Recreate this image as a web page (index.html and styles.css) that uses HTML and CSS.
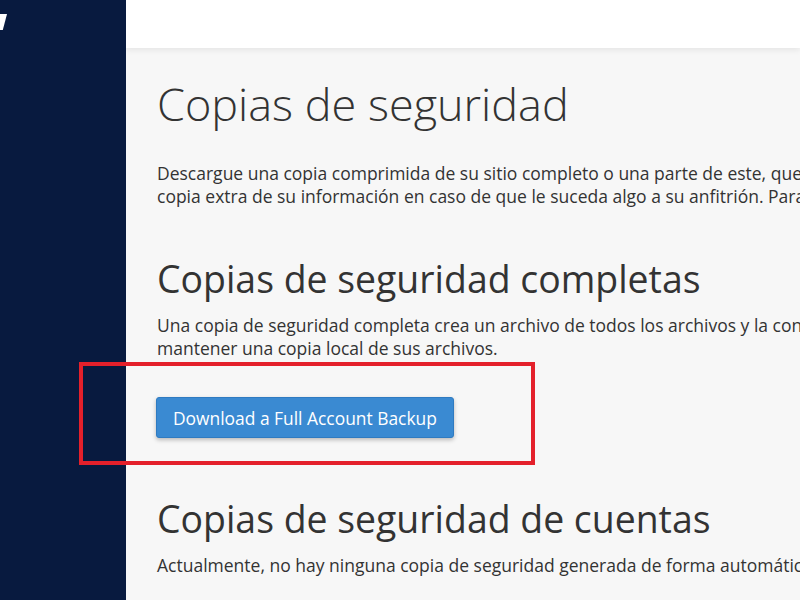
FILE: index.html
```html
<!DOCTYPE html>
<html lang="es">
<head>
  <meta charset="UTF-8">
  <title>Copias de seguridad</title>
  <link rel="stylesheet" href="styles.css">
</head>
<body>
  <div class="layout">
    <aside class="sidebar">
      <div class="logo-bit"></div>
    </aside>
    <div class="main">
      <header class="topbar"></header>
      <div class="content">
        <h1>Copias de seguridad</h1>
        <p class="lead">Descargue una copia comprimida de su sitio completo o una parte de este, que puede guardar en su computadora. Cuando realiza una<br>copia extra de su información en caso de que le suceda algo a su anfitrión. Para obtener más información, lea la documentación.</p>

        <h2>Copias de seguridad completas</h2>
        <p>Una copia de seguridad completa crea un archivo de todos los archivos y la configuración de su sitio web. Puede utilizar este archivo para<br>mantener una copia local de sus archivos.</p>
        <div class="highlight">
          <button class="btn">Download a Full Account Backup</button>
        </div>

        <h2>Copias de seguridad de cuentas</h2>
        <p>Actualmente, no hay ninguna copia de seguridad generada de forma automática disponible.</p>
      </div>
    </div>
  </div>
</body>
</html>
```

FILE: styles.css
```css
body {
  margin: 0;
  font-family: "Open Sans", sans-serif;
  color: #333;
  background-color: #f7f7f7;
  overflow: hidden;
}

.layout {
  display: flex;
  height: 600px;
}

.sidebar {
  width: 126px;
  flex-shrink: 0;
  background-color: #081a3f;
  position: relative;
}

.logo-bit {
  position: absolute;
  left: 0;
  top: 14px;
  width: 7px;
  height: 16px;
  background-color: #fff;
  clip-path: polygon(0 0, 100% 0, 40% 100%, 0 100%);
}

.main {
  flex: 1;
  min-width: 0;
}

.topbar {
  height: 48px;
  background-color: #fff;
  box-shadow: 0 2px 6px rgba(0, 0, 0, 0.08);
}

.content {
  padding: 26px 0 0 31px;
  white-space: nowrap;
}

h1 {
  font-size: 45px;
  font-weight: 300;
  margin: 0 0 28px;
  line-height: 60px;
}

h2 {
  font-size: 37.4px;
  font-weight: 400;
  margin: 0 0 10px;
  line-height: 50px;
}

p {
  font-size: 17.5px;
  line-height: 23px;
  margin: 0;
}

.lead {
  margin-bottom: 46px;
}

.highlight {
  position: relative;
  margin: 2px 0 29px -78px;
  width: 456px;
  height: 103px;
  box-sizing: border-box;
  border: 4px solid #e4202b;
  padding: 31px 0 0 73px;
}

.btn {
  font-family: "Open Sans", sans-serif;
  font-size: 17.4px;
  color: #fff;
  background-color: #3a8ad2;
  border: 1px solid #2f7bc1;
  border-radius: 3px;
  height: 41px;
  padding: 0 16px;
  box-shadow: 0 2px 4px rgba(0, 0, 0, 0.25);
}
```
